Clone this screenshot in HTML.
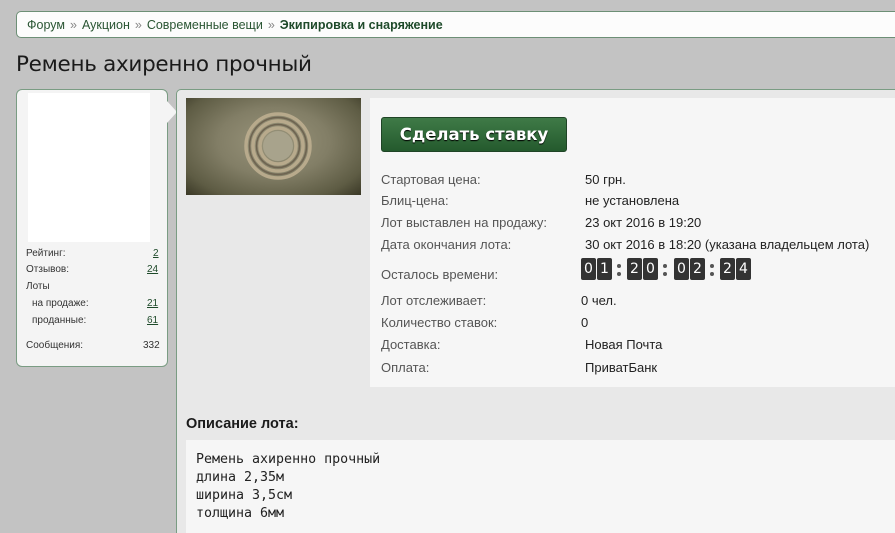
<!DOCTYPE html>
<html><head><meta charset="utf-8"><style>
*{margin:0;padding:0;box-sizing:border-box}
html,body{width:895px;height:533px;overflow:hidden}
body{background:#c3c3c3;font-family:"Liberation Sans","DejaVu Sans",sans-serif;position:relative;color:#222}
.abs{position:absolute}
.bc{left:16px;top:11px;width:895px;height:27px;background:#fcfcfc;border:1px solid #6d8f76;border-radius:5px;font-size:12.5px;color:#2a5533;padding:6px 0 0 10px;white-space:nowrap}
.bc span.s{color:#888;margin:0 5px}
.bc b{color:#1e4a2a}
h1{position:absolute;left:16px;top:52px;font-size:21.5px;font-weight:normal;color:#1a1a1a;font-family:"DejaVu Sans",sans-serif;letter-spacing:-0.3px}
.side{left:16px;top:89px;width:152px;height:278px;background:#f4f4f4;border:1px solid #7a9c83;border-radius:6px}
.av{left:28px;top:93px;width:122px;height:149px;background:#fff}
.arr{left:167px;top:101px;width:0;height:0;border-top:11px solid transparent;border-bottom:11px solid transparent;border-left:10px solid #f4f4f4}
.st{font-size:10px;color:#333}
.st a{color:#1e4a2a;text-decoration:underline}
.main{left:176px;top:89px;width:730px;height:460px;background:#e8e8e8;border:1px solid #7a9c83;border-radius:5px}
.img{left:186px;top:98px;width:175px;height:97px;background:radial-gradient(ellipse at 50% 45%,#9a957c 0%,#827e66 45%,#5e5c44 80%,#3a3826 100%)}
.info{left:370px;top:98px;width:540px;height:289px;background:#f6f6f6}
.btn{left:381px;top:117px;width:186px;height:35px;border:1px solid #1f4426;border-radius:3px;background:linear-gradient(#3f7a47,#245a2d);color:#fff;font-weight:bold;font-size:16.5px;text-align:center;line-height:33px;font-family:"DejaVu Sans",sans-serif;text-shadow:0 1px 1px #000}
.l,.v{position:absolute;font-size:13px;white-space:nowrap}
.l{left:381px;color:#555}
.v{left:585px;color:#222}
.d{position:absolute;top:258px;width:15px;height:22px;background:#333;border-radius:2px;color:#fff;font-size:14px;text-align:center;line-height:22px;font-family:"DejaVu Sans",sans-serif}
.c{position:absolute;width:4px;height:4px;border-radius:2px;background:#555}
.desc{left:186px;top:440px;width:720px;height:100px;background:#f6f6f6;font-family:"DejaVu Sans Mono","Liberation Mono",monospace;font-size:13.3px;line-height:18px;padding:11px 0 0 10px;color:#222}
</style></head><body>
<div class="abs bc">Форум<span class="s">»</span>Аукцион<span class="s">»</span>Современные вещи<span class="s">»</span><b>Экипировка и снаряжение</b></div>
<h1>Ремень ахиренно прочный</h1>
<div class="abs side"></div>
<div class="abs av"></div>
<div class="abs arr"></div>
<div class="abs st" style="left:26px;top:248px">Рейтинг:</div><div class="abs st" style="left:153px;top:248px"><a>2</a></div>
<div class="abs st" style="left:26px;top:264px">Отзывов:</div><div class="abs st" style="left:147px;top:264px"><a>24</a></div>
<div class="abs st" style="left:26px;top:281px">Лоты</div>
<div class="abs st" style="left:32px;top:298px">на продаже:</div><div class="abs st" style="left:147px;top:298px"><a>21</a></div>
<div class="abs st" style="left:32px;top:315px">проданные:</div><div class="abs st" style="left:147px;top:315px"><a>61</a></div>
<div class="abs st" style="left:26px;top:340px">Сообщения:</div><div class="abs st" style="left:143px;top:340px">332</div>
<div class="abs main"></div>
<div class="abs img"><svg width="175" height="97"><g fill="none" stroke="#b8aa8c" stroke-width="3.5"><circle cx="92" cy="48" r="32"/><circle cx="92" cy="48" r="25"/><circle cx="92" cy="48" r="18"/></g><g fill="none" stroke="#6e6350" stroke-width="1.5"><circle cx="92" cy="48" r="28.5"/><circle cx="92" cy="48" r="21.5"/></g><circle cx="92" cy="48" r="15" fill="#a8a38c"/></svg></div>
<div class="abs info"></div>
<div class="abs btn">Сделать ставку</div>
<div class="l" style="top:172px">Стартовая цена:</div><div class="v" style="top:172px">50 грн.</div>
<div class="l" style="top:193px">Блиц-цена:</div><div class="v" style="top:193px">не установлена</div>
<div class="l" style="top:215px">Лот выставлен на продажу:</div><div class="v" style="top:215px">23 окт 2016 в 19:20</div>
<div class="l" style="top:237px">Дата окончания лота:</div><div class="v" style="top:237px">30 окт 2016 в 18:20 (указана владельцем лота)</div>
<div class="l" style="top:267px">Осталось времени:</div>
<div class="d" style="left:581px">0</div><div class="d" style="left:597px">1</div>
<div class="c" style="left:617px;top:264px"></div><div class="c" style="left:617px;top:272px"></div>
<div class="d" style="left:627px">2</div><div class="d" style="left:643px">0</div>
<div class="c" style="left:663px;top:264px"></div><div class="c" style="left:663px;top:272px"></div>
<div class="d" style="left:674px">0</div><div class="d" style="left:690px">2</div>
<div class="c" style="left:710px;top:264px"></div><div class="c" style="left:710px;top:272px"></div>
<div class="d" style="left:720px">2</div><div class="d" style="left:736px">4</div>
<div class="l" style="top:293px">Лот отслеживает:</div><div class="v" style="top:293px;left:581px">0 чел.</div>
<div class="l" style="top:315px">Количество ставок:</div><div class="v" style="top:315px;left:581px">0</div>
<div class="l" style="top:337px">Доставка:</div><div class="v" style="top:337px">Новая Почта</div>
<div class="l" style="top:360px">Оплата:</div><div class="v" style="top:360px">ПриватБанк</div>
<div class="abs" style="left:186px;top:416px;font-size:14.5px;font-weight:bold;color:#1a1a1a">Описание лота:</div>
<div class="abs desc">Ремень ахиренно прочный<br>длина 2,35м<br>ширина 3,5см<br>толщина 6мм</div>
</body></html>
